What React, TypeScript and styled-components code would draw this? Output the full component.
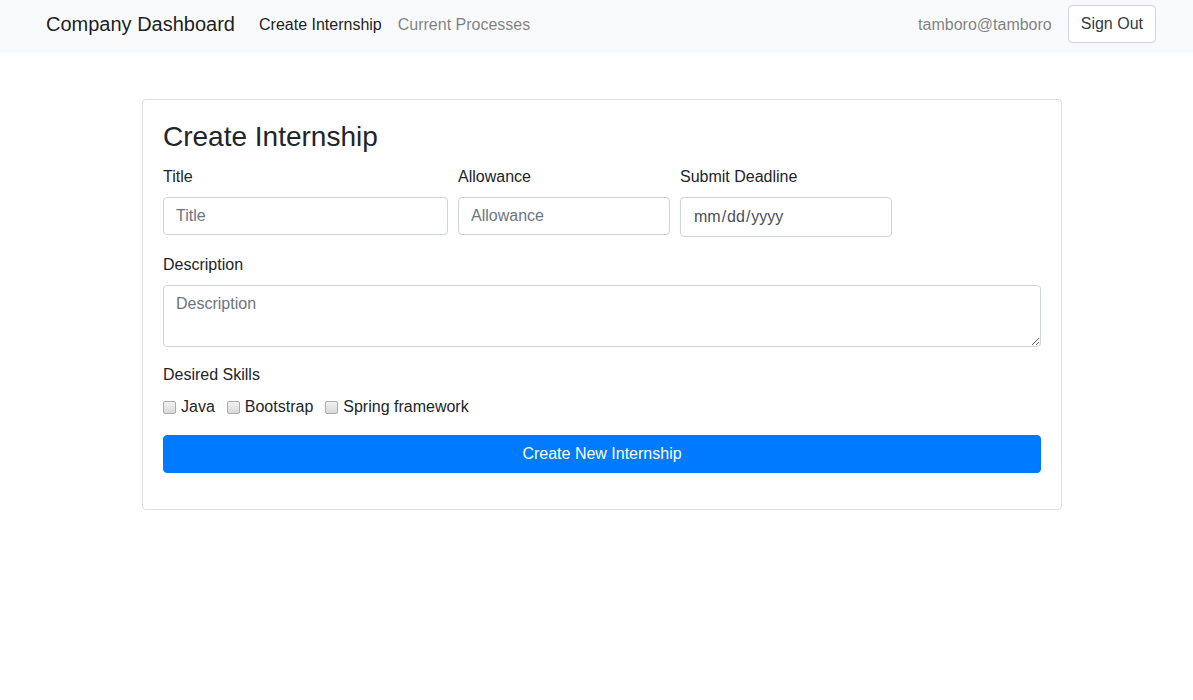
import styled, { createGlobalStyle } from 'styled-components';

const GlobalStyle = createGlobalStyle`
  * {
    box-sizing: border-box;
  }
  body {
    margin: 0;
    font-family: "Liberation Sans", Arial, sans-serif;
    font-size: 16px;
    line-height: 1.5;
    color: #212529;
    background: #fff;
  }
`;

const Navbar = styled.nav`
  display: flex;
  align-items: center;
  height: 53px;
  padding: 0 37px 4px 46px;
  background: #f8f9fa;
`;

const Brand = styled.a`
  font-size: 20px;
  line-height: 30px;
  color: rgba(0, 0, 0, 0.9);
  margin-right: 16px;
  text-decoration: none;
  padding-bottom: 1px;
`;

const NavLink = styled.a<{ $active?: boolean }>`
  padding: 8px;
  color: ${(p) => (p.$active ? 'rgba(0, 0, 0, 0.9)' : 'rgba(0, 0, 0, 0.5)')};
  text-decoration: none;
`;

const NavRight = styled.div`
  margin-left: auto;
  display: flex;
  align-items: center;
  gap: 16px;
`;

const NavText = styled.span`
  color: rgba(0, 0, 0, 0.5);
`;

const OutlineButton = styled.button`
  font: inherit;
  color: #343a40;
  background: #fff;
  border: 1px solid #ced4da;
  border-radius: 4px;
  padding: 6px 12px;
  line-height: 24px;
  margin-top: -1px;
`;

const Card = styled.div`
  width: 920px;
  margin: 46px 0 0 142px;
  border: 1px solid rgba(0, 0, 0, 0.125);
  border-radius: 4px;
  padding: 20px 20px 36px;
`;

const Heading = styled.h3`
  margin: 0 0 11px;
  font-size: 28px;
  font-weight: 400;
  line-height: 1.2;
`;

const FormRow = styled.div`
  display: grid;
  grid-template-columns: 285px 212px 212px;
  column-gap: 10px;
  margin-bottom: 16px;
`;

const Group = styled.div`
  display: flex;
  flex-direction: column;
  margin-bottom: 16px;
`;

const Label = styled.label`
  display: block;
  margin-bottom: 8px;
`;

const Input = styled.input`
  display: block;
  width: 100%;
  height: ${(p) => (p.type === 'date' ? '40px' : '38px')};
  padding: 6px 12px;
  font: inherit;
  color: #495057;
  background: #fff;
  border: 1px solid #ced4da;
  border-radius: 4px;
  &::placeholder {
    color: #6c757d;
  }
  &::-webkit-calendar-picker-indicator {
    display: none;
  }
`;

const TextArea = styled.textarea`
  display: block;
  width: 100%;
  height: 62px;
  padding: 6px 12px;
  font: inherit;
  line-height: 24px;
  color: #495057;
  border: 1px solid #ced4da;
  border-radius: 4px;
  resize: vertical;
  &::placeholder {
    color: #6c757d;
  }
`;

const CheckList = styled.div`
  display: flex;
  align-items: center;
`;

const CheckItem = styled.label`
  display: inline-flex;
  align-items: center;
  margin-right: 12px;
`;

const Check = styled.input`
  appearance: none;
  width: 13px;
  height: 13px;
  margin: 1px 5px 0 0;
  border: 1px solid #a9a9a9;
  border-radius: 2px;
  background: linear-gradient(#f2f2f2, #d9d9d9);
`;

const PrimaryButton = styled.button`
  display: block;
  width: 100%;
  font: inherit;
  line-height: 24px;
  padding: 6px 12px;
  color: #fff;
  background: #007bff;
  border: 1px solid #007bff;
  border-radius: 4px;
`;

const skills = ['Java', 'Bootstrap', 'Spring framework'];

const App = () => {
  return (
    <>
      <GlobalStyle />
      <Navbar>
        <Brand href="#">Company Dashboard</Brand>
        <NavLink href="#" $active>
          Create Internship
        </NavLink>
        <NavLink href="#">Current Processes</NavLink>
        <NavRight>
          <NavText>tamboro@tamboro</NavText>
          <OutlineButton type="button">Sign Out</OutlineButton>
        </NavRight>
      </Navbar>
      <Card>
        <Heading>Create Internship</Heading>
        <FormRow>
          <div>
            <Label htmlFor="title">Title</Label>
            <Input id="title" type="text" placeholder="Title" />
          </div>
          <div>
            <Label htmlFor="allowance">Allowance</Label>
            <Input id="allowance" type="text" placeholder="Allowance" />
          </div>
          <div>
            <Label htmlFor="deadline">Submit Deadline</Label>
            <Input id="deadline" type="date" />
          </div>
        </FormRow>
        <Group>
          <Label htmlFor="description">Description</Label>
          <TextArea id="description" rows={2} placeholder="Description" />
        </Group>
        <Group>
          <Label>Desired Skills</Label>
          <CheckList>
            {skills.map((skill) => (
              <CheckItem key={skill}>
                <Check type="checkbox" />
                {skill}
              </CheckItem>
            ))}
          </CheckList>
        </Group>
        <PrimaryButton type="button">Create New Internship</PrimaryButton>
      </Card>
    </>
  );
};

export default App;
